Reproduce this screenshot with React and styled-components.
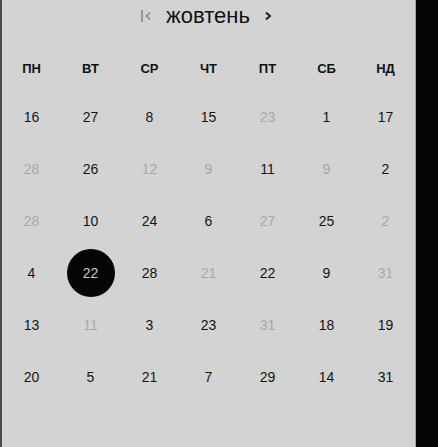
import React from 'react'
import styled, { createGlobalStyle } from 'styled-components'

const GlobalStyle = createGlobalStyle`
  html, body {
    margin: 0;
    padding: 0;
    background: #050505;
  }
  body {
    font-family: "Liberation Sans", Arial, sans-serif;
  }
`

const weekdays = ['ПН', 'ВТ', 'СР', 'ЧТ', 'ПТ', 'СБ', 'НД']

// [day, muted, selected]
const rows = [
  [[16], [27], [8], [15], [23, 1], [1], [17]],
  [[28, 1], [26], [12, 1], [9, 1], [11], [9, 1], [2]],
  [[28, 1], [10], [24], [6], [27, 1], [25], [2, 1]],
  [[4], [22, 0, 1], [28], [21, 1], [22], [9], [31, 1]],
  [[13], [11, 1], [3], [23], [31, 1], [18], [19]],
  [[20], [5], [21], [7], [29], [14], [31]],
]

const Screen = styled.div`
  display: flex;
  height: 447px;
  width: 438px;
  background: #050505;
`

const Panel = styled.section`
  width: 413px;
  height: 100%;
  background: #d3d3d3;
  border-left: 2px solid #4a4a4a;
  border-right: 1px solid #a0a0a0;
`

const Header = styled.div`
  height: 32px;
  display: flex;
  align-items: center;
  justify-content: center;
  gap: 14px;
  padding-right: 4px;
`

const Title = styled.h2`
  margin: 0;
  font-size: 22px;
  font-weight: 400;
  color: #111;
  line-height: 1;
`

const NavButton = styled.button`
  border: 0;
  background: none;
  padding: 0;
  display: flex;
  align-items: center;
  color: ${p => p.$dim ? '#8a8a8a' : '#222'};
`

const WeekRow = styled.div`
  margin-top: 20px;
  height: 32px;
  display: grid;
  grid-template-columns: repeat(7, 1fr);
  align-items: center;
  justify-items: center;
`

const WeekDay = styled.span`
  font-size: 13px;
  font-weight: 700;
  color: #111;
`

const Days = styled.div`
  margin-top: 7px;
  display: grid;
  grid-template-columns: repeat(7, 1fr);
  grid-auto-rows: 52px;
  align-items: center;
  justify-items: center;
`

const Day = styled.div`
  width: 48px;
  height: 48px;
  border-radius: 50%;
  display: flex;
  align-items: center;
  justify-content: center;
  font-size: 14px;
  background: ${p => p.$selected ? '#050505' : 'transparent'};
  color: ${p => p.$selected ? '#c8c8c8' : p.$muted ? '#a9a9a9' : '#151515'};
`

const App = () => {
  return <>
    <GlobalStyle />
    <Screen>
      <Panel>
        <Header>
          <NavButton $dim>
            <svg width="11" height="14" viewBox="0 0 11 14" fill="none">
              <line x1="1" y1="1" x2="1" y2="13" stroke="currentColor" strokeWidth="1.6" />
              <polyline points="9,3.5 5.5,7 9,10.5" stroke="currentColor" strokeWidth="1.6" />
            </svg>
          </NavButton>
          <Title>жовтень</Title>
          <NavButton>
            <svg width="8" height="12" viewBox="0 0 8 12" fill="none">
              <polyline points="2,2.5 6,6 2,9.5" stroke="currentColor" strokeWidth="2" />
            </svg>
          </NavButton>
        </Header>
        <WeekRow>
          {weekdays.map(d => <WeekDay key={d}>{d}</WeekDay>)}
        </WeekRow>
        <Days>
          {rows.flat().map(([n, muted, sel], i) =>
            <Day key={i} $muted={muted} $selected={sel}>{n}</Day>
          )}
        </Days>
      </Panel>
    </Screen>
  </>
}

export default App
